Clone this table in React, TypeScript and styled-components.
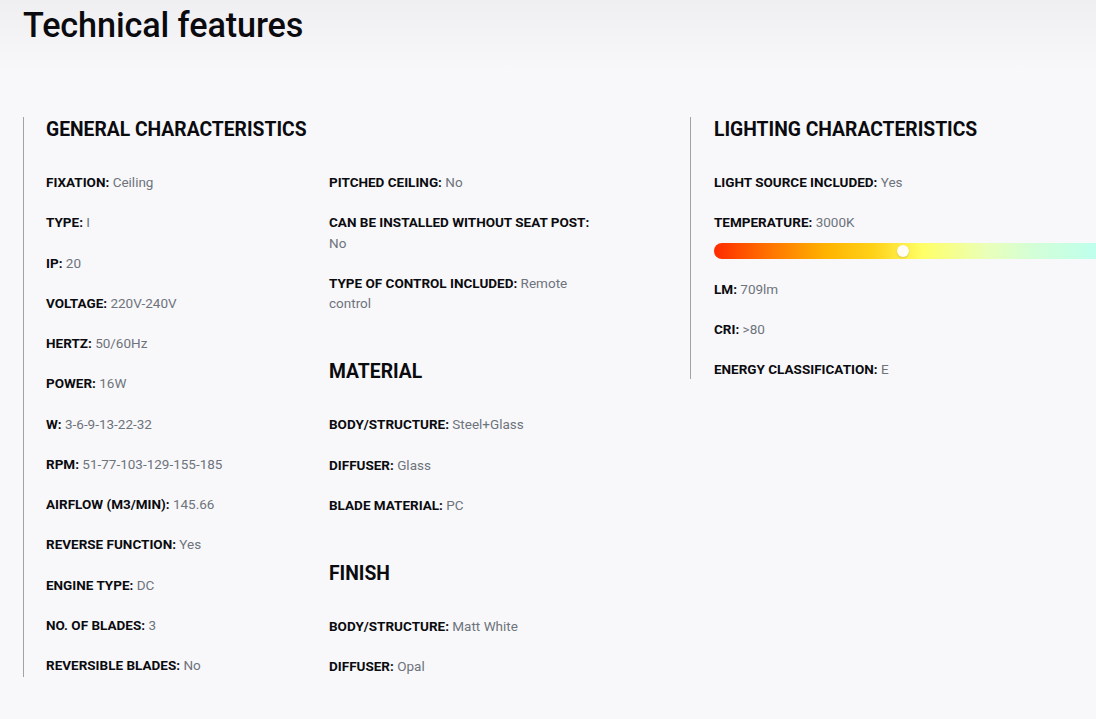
import React from "react";
import styled, { createGlobalStyle } from "styled-components";

const GlobalStyle = createGlobalStyle`
  html, body { margin: 0; padding: 0; }
  body {
    background: linear-gradient(to bottom, #efeff1 0px, #f8f8fa 70px, #f8f8fa 100%);
    font-family: Roboto, "Liberation Sans", Arial, sans-serif;
    color: #111;
    overflow-x: hidden;
    min-height: 719px;
  }
`;

const Page = styled.div`
  padding: 0 0 40px 23px;
  width: 1200px;
`;

const Title = styled.h2`
  margin: 0;
  padding-top: 5px;
  font-size: 34.2px;
  line-height: 40px;
  font-weight: 500;
  color: #0b0b0f;
  letter-spacing: -0.1px;
`;

const Sections = styled.div`
  display: flex;
  align-items: flex-start;
  margin-top: 72px;
`;

const Section = styled.section<{ $width: number; $pad: number }>`
  flex: none;
  width: ${(p) => p.$width}px;
  box-sizing: border-box;
  border-left: 1px solid #a3a3a6;
  padding-left: ${(p) => p.$pad}px;
`;

const Heading = styled.h3<{ $top?: number }>`
  margin: ${(p) => p.$top ?? 0}px 0 30px;
  font-size: 19.3px;
  line-height: 25px;
  font-weight: 700;
  color: #0b0b0f;
  text-transform: uppercase;
`;

const Columns = styled.div`
  display: grid;
  grid-template-columns: 270px 270px;
  column-gap: 13px;
`;

const Column = styled.div`
  display: flex;
  flex-direction: column;
`;

const Item = styled.div`
  font-size: 13.5px;
  line-height: 1.5;
  margin-bottom: 20px;
  &:last-child { margin-bottom: 0; }
`;

const Label = styled.span`
  font-weight: 700;
  color: #0b0b0f;
`;

const Value = styled.span`
  color: #6e737c;
`;

const Bar = styled.div`
  position: relative;
  margin-top: 10px;
  height: 16px;
  width: 400px;
  border-radius: 8px;
  background: linear-gradient(
    to right,
    #ff2a00 0%,
    #ff6a00 12%,
    #ffb300 28%,
    #ffd21a 40%,
    #ffff66 52%,
    #eaffb8 68%,
    #d3ffd8 80%,
    #b8fff2 100%
  );
`;

const Thumb = styled.div`
  position: absolute;
  top: 2px;
  width: 12px;
  height: 12px;
  margin-left: -6px;
  border-radius: 50%;
  background: #fffdf6;
  box-shadow: 0 1px 2px rgba(0, 0, 0, 0.15);
`;

type Spec = [string, string];

const Row = ({ spec }: { spec: Spec }) => (
  <Item>
    <Label>{spec[0]}:</Label> <Value>{spec[1]}</Value>
  </Item>
);

const col1: Spec[] = [
  ["FIXATION", "Ceiling"],
  ["TYPE", "I"],
  ["IP", "20"],
  ["VOLTAGE", "220V-240V"],
  ["HERTZ", "50/60Hz"],
  ["POWER", "16W"],
  ["W", "3-6-9-13-22-32"],
  ["RPM", "51-77-103-129-155-185"],
  ["AIRFLOW (M3/MIN)", "145.66"],
  ["REVERSE FUNCTION", "Yes"],
  ["ENGINE TYPE", "DC"],
  ["NO. OF BLADES", "3"],
  ["REVERSIBLE BLADES", "No"],
];

const col2: Spec[] = [
  ["PITCHED CEILING", "No"],
  ["CAN BE INSTALLED WITHOUT SEAT POST", "No"],
  ["TYPE OF CONTROL INCLUDED", "Remote control"],
];

const material: Spec[] = [
  ["BODY/STRUCTURE", "Steel+Glass"],
  ["DIFFUSER", "Glass"],
  ["BLADE MATERIAL", "PC"],
];

const finish: Spec[] = [
  ["BODY/STRUCTURE", "Matt White"],
  ["DIFFUSER", "Opal"],
];

export default function App() {
  const thumbPos = 189;
  return (
    <>
      <GlobalStyle />
      <Page>
        <Title>Technical features</Title>
        <Sections>
          <Section $width={667} $pad={22}>
            <Heading>General characteristics</Heading>
            <Columns>
              <Column>
                {col1.map((s) => (
                  <Row key={s[0]} spec={s} />
                ))}
              </Column>
              <Column>
                {col2.map((s) => (
                  <Row key={s[0]} spec={s} />
                ))}
                <Heading $top={26}>Material</Heading>
                {material.map((s) => (
                  <Row key={s[0]} spec={s} />
                ))}
                <Heading $top={26}>Finish</Heading>
                {finish.map((s) => (
                  <Row key={s[0]} spec={s} />
                ))}
              </Column>
            </Columns>
          </Section>
          <Section $width={440} $pad={23}>
            <Heading>Lighting characteristics</Heading>
            <Column>
              <Row spec={["LIGHT SOURCE INCLUDED", "Yes"]} />
              <Item>
                <Label>TEMPERATURE:</Label> <Value>3000K</Value>
                <Bar>
                  <Thumb style={{ left: thumbPos }} />
                </Bar>
              </Item>
              <Row spec={["LM", "709lm"]} />
              <Row spec={["CRI", ">80"]} />
              <Row spec={["ENERGY CLASSIFICATION", "E"]} />
            </Column>
          </Section>
        </Sections>
      </Page>
    </>
  );
}
